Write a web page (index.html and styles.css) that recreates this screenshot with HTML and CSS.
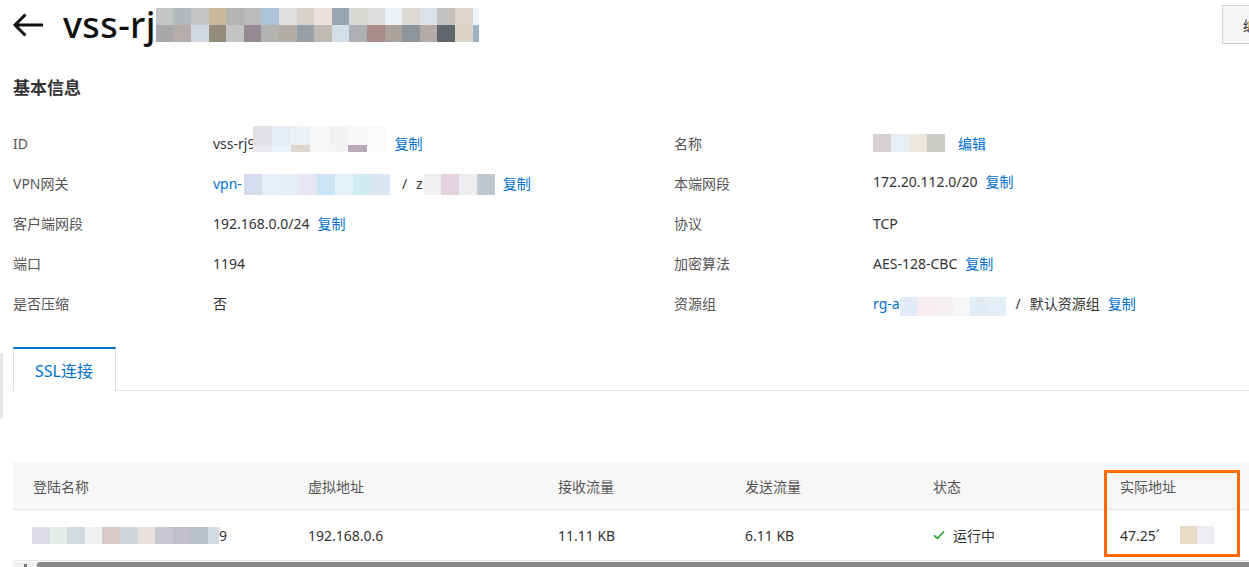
FILE: index.html
```html
<!DOCTYPE html>
<html lang="zh-CN">
<head>
<meta charset="utf-8">
<title>vss-rj9</title>
<link rel="stylesheet" href="styles.css">
</head>
<body>
<div class="side-hint"></div>
<header class="top">
  <div class="title-wrap">
    <svg class="back" viewBox="0 0 32 24" width="32" height="24"><path d="M31 12H3M13.5 1.5L3 12l10.5 10.5" fill="none" stroke="#111" stroke-width="3"/></svg>
    <h1 class="title">vss-rj9</h1>
    <span class="mz mz-title">
      <i style="background:#c5c6c6"></i><i style="background:#b5b8bc"></i><i style="background:#c4c5c6"></i><i style="background:#c9b99a"></i><i style="background:#b6b5b4"></i><i style="background:#bbbbbc"></i><i style="background:#adc2d6"></i><i style="background:#e0e0e0"></i><i style="background:#d8d2cc"></i><i style="background:#ebdfdf"></i><i style="background:#97a5b1"></i><i style="background:#d9d8d4"></i><i style="background:#dcdcdc"></i><i style="background:#eef2f5"></i><i style="background:#dcd8d4"></i><i style="background:#dde1e8"></i><i style="background:#c3c2c1"></i><i style="background:#dcd6cc"></i><i style="background:#eef4fa"></i>
      <i style="background:#a8a8a8"></i><i style="background:#b5adab"></i><i style="background:#d2d9e0"></i><i style="background:#938c7a"></i><i style="background:#c4c4c4"></i><i style="background:#958a91"></i><i style="background:#b3b4b2"></i><i style="background:#b1ada7"></i><i style="background:#9a9fa6"></i><i style="background:#bfbab4"></i><i style="background:#d3dee7"></i><i style="background:#aeafb2"></i><i style="background:#a88b8b"></i><i style="background:#a9a29d"></i><i style="background:#8f969b"></i><i style="background:#b4aaa7"></i><i style="background:#60666c"></i><i style="background:#dbd4c8"></i><i style="background:#9db0c0"></i>
    </span>
  </div>
  <button class="edit-btn" type="button">编辑</button>
</header>

<section class="info">
  <h2 class="sec-title">基本信息</h2>
  <div class="info-grid">
    <div class="lbl">ID</div>
    <div class="val">vss-rj9<span class="mz mz-id">
      <i style="background:#e4e1e6"></i><i style="background:#e6ecf3"></i><i style="background:#eef1f5"></i><i style="background:#f9f9fa"></i><i style="background:#f4f3f2"></i><i style="background:#f9f8fa"></i><i style="background:#fafafc"></i>
      <i style="background:#eae8ec"></i><i style="background:#ecf4fa"></i><i style="background:#dcd8d0"></i><i style="background:#f8f8f8"></i><i style="background:#f4f4f4"></i><i style="background:#bca8bc"></i><i style="background:#fafafc"></i>
    </span><a class="link copy">复制</a></div>
    <div class="lbl">名称</div>
    <div class="val"><span class="mz mz-name">
      <i style="background:#d6d2d4"></i><i style="background:#e8eef6"></i><i style="background:#ece8e0"></i><i style="background:#ccccc8"></i>
    </span><a class="link edit">编辑</a></div>

    <div class="lbl">VPN网关</div>
    <div class="val"><a class="link">vpn-</a><span class="mz mz-vpn">
      <i style="background:#d6dcee"></i><i style="background:#e6eff8"></i><i style="background:#e4ecf4"></i><i style="background:#e6e6f4"></i><i style="background:#cce4f4"></i><i style="background:#e4f2fa"></i><i style="background:#d2ecf4"></i><i style="background:#dce6f4"></i>
    </span><span class="sep">/</span><span class="zchar">z</span><span class="mz mz-z">
      <i style="background:#f0f0f0"></i><i style="background:#e6d2de"></i><i style="background:#eceef0"></i><i style="background:#c0c8d0"></i>
    </span><a class="link copy">复制</a></div>
    <div class="lbl">本端网段</div>
    <div class="val up">172.20.112.0/20<a class="link copy">复制</a></div>

    <div class="lbl">客户端网段</div>
    <div class="val">192.168.0.0/24<a class="link copy">复制</a></div>
    <div class="lbl">协议</div>
    <div class="val">TCP</div>

    <div class="lbl">端口</div>
    <div class="val">1194</div>
    <div class="lbl">加密算法</div>
    <div class="val">AES-128-CBC<a class="link copy">复制</a></div>

    <div class="lbl">是否压缩</div>
    <div class="val">否</div>
    <div class="lbl">资源组</div>
    <div class="val"><a class="link">rg-a</a><span class="mz mz-rg">
      <i style="background:#e2ecf8"></i><i style="background:#f8eef0"></i><i style="background:#f4f0f4"></i><i style="background:#f8f6f8"></i><i style="background:#e0ecf6"></i><i style="background:#e4eef8"></i>
    </span><span class="sep sep-rg">/</span>默认资源组<a class="link copy">复制</a></div>
  </div>
</section>

<nav class="tabs">
  <div class="tab active">SSL连接</div>
  <div class="tab-fill"></div>
</nav>

<section class="table">
  <div class="trow thead">
    <div class="cell">登陆名称</div>
    <div class="cell">虚拟地址</div>
    <div class="cell">接收流量</div>
    <div class="cell">发送流量</div>
    <div class="cell">状态</div>
    <div class="cell">实际地址</div>
  </div>
  <div class="trow tbody">
    <div class="cell"><span class="mz mz-login">
      <i style="background:#dcdce6"></i><i style="background:#e6ebe8"></i><i style="background:#d4dbde"></i><i style="background:#eff0f0"></i><i style="background:#d9c9c9"></i><i style="background:#d3d7da"></i><i style="background:#e8e1dd"></i><i style="background:#c6c7d0"></i><i style="background:#c2bfcb"></i><i style="background:#b8bfc6"></i><i style="background:#d4dbe4"></i>
    </span>9</div>
    <div class="cell">192.168.0.6</div>
    <div class="cell">11.11 KB</div>
    <div class="cell">6.11 KB</div>
    <div class="cell"><svg class="check" viewBox="0 0 12 10" width="12" height="10"><path d="M1 5.2l3.3 3.2L11 1.5" fill="none" stroke="#1fa12e" stroke-width="1.6"/></svg>运行中</div>
    <div class="cell">47.25´<span class="mz mz-real">
      <i style="background:#e8dcc8"></i><i style="background:#eeecf2"></i>
    </span></div>
  </div>
  <div class="highlight"></div>
</section>

<div class="hscroll">
  <div class="hscroll-arrow"><span></span></div>
  <div class="hscroll-thumb"></div>
</div>
</body>
</html>
```

FILE: styles.css
```css
* { box-sizing: border-box; }
html, body { margin: 0; padding: 0; background: #fff; }
body {
  width: 1249px;
  height: 567px;
  overflow: hidden;
  position: relative;
  font-family: "Noto Sans", "Noto Sans CJK SC", sans-serif;
  font-size: 14px;
  color: #333;
}

.side-hint {
  position: absolute;
  left: 0;
  top: 353px;
  width: 3px;
  height: 65px;
  background: #e6e6e6;
}

/* header */
.top {
  display: flex;
  justify-content: space-between;
  height: 50px;
  padding-left: 12px;
}
.title-wrap { display: flex; align-items: center; }
.back { margin-right: 19px; flex: none; }
.title {
  margin: 0;
  font-size: 36px;
  font-weight: 500;
  color: #111;
  line-height: 50px;
  letter-spacing: 0.4px;
}
.edit-btn {
  margin-top: 5px;
  height: 39px;
  width: 70px;
  margin-right: -43px;
  border: 1px solid #cfcfcf;
  background: #f6f6f6;
  font: inherit;
  color: #333;
  text-align: left;
  padding: 0 0 0 20px;
}

/* mosaics */
.mz { display: inline-grid; flex: none; }
.mz i { display: block; }
.mz-title {
  grid-template-columns: repeat(18, 17.6px) 6px;
  grid-auto-rows: 17px;
  margin-left: -21px;
}
.mz-id {
  grid-template-columns: repeat(7, 19px);
  grid-template-rows: 19px 7px;
  align-self: flex-start;
  margin: 3px 0 0 -2px;
}
.mz-name {
  grid-template-columns: repeat(4, 18px);
  grid-template-rows: 18px;
  align-self: flex-start;
  margin-top: 11px;
}
.mz-vpn {
  grid-template-columns: repeat(8, 18.25px);
  grid-template-rows: 21px;
  align-self: flex-start;
  margin: 11px 0 0 2px;
}
.mz-z {
  grid-template-columns: repeat(4, 17.75px);
  grid-template-rows: 21px;
  align-self: flex-start;
  margin-top: 11px;
}
.mz-rg {
  grid-template-columns: repeat(6, 17.67px);
  grid-template-rows: 19px;
  align-self: flex-start;
  margin-top: 14px;
}
.mz-login {
  grid-template-columns: repeat(10, 17.6px) 11px;
  grid-template-rows: 17px;
  margin-left: -1px;
}
.mz-real {
  grid-template-columns: repeat(2, 17px);
  grid-template-rows: 18px;
  margin-left: 20px;
}

/* info */
.sec-title {
  margin: 26px 0 0 13px;
  font-size: 17px;
  font-weight: 700;
  line-height: 24px;
  color: #333;
}
.info-grid {
  display: grid;
  grid-template-columns: 200px 461px 199px 1fr;
  grid-auto-rows: 40px;
  margin-top: 23px;
  padding-left: 13px;
}
.lbl, .val {
  display: flex;
  align-items: center;
  white-space: nowrap;
}
.lbl { color: #555; }
.val { color: #333; }
.val.up { padding-bottom: 4px; }
.link { color: #0070cc; cursor: pointer; }
.copy { margin-left: 8px; }
.edit { margin-left: 13px; }
.sep { margin-left: 12px; }
.sep-rg { margin: 0 9px 0 10px; }
.zchar { margin-left: 9px; margin-right: 1px; }

/* tabs */
.tabs {
  display: flex;
  height: 44px;
  margin-top: 24px;
  padding-left: 13px;
}
.tab {
  border: 1px solid #dcdcdc;
  border-top: 2px solid #0070cc;
  border-bottom: none;
  padding: 0 22px 0 21px;
  display: flex;
  align-items: center;
  font-size: 16px;
  color: #0070cc;
  background: #fff;
}
.tab-fill {
  flex: 1;
  border-bottom: 1px solid #e3e3e3;
}

/* table */
.table {
  position: relative;
  margin: 71px 0 0 13px;
}
.trow {
  display: grid;
  grid-template-columns: 275px 250px 187px 188px 187px 1fr;
  border-bottom: 1px solid #e6e6e6;
}
.thead { height: 48px; background: #f7f7f7; color: #555; }
.tbody { height: 51px; color: #333; }
.cell {
  display: flex;
  align-items: center;
  padding-left: 20px;
  white-space: nowrap;
}
.check { margin-right: 8px; flex: none; }
.highlight {
  position: absolute;
  left: 1091px;
  top: 8px;
  width: 136px;
  height: 87px;
  border: 3px solid #ff6a00;
}

/* horizontal scrollbar */
.hscroll {
  display: flex;
  height: 5px;
  margin: 1px 0 0 13px;
  background: #f1f1f1;
}
.hscroll-arrow {
  width: 24px;
  display: flex;
  justify-content: center;
  align-items: flex-end;
}
.hscroll-arrow span {
  width: 3px;
  height: 3px;
  background: #777;
}
.hscroll-thumb {
  flex: 1;
  background: #8a8a8a;
  border-radius: 3px 0 0 0;
}
```
